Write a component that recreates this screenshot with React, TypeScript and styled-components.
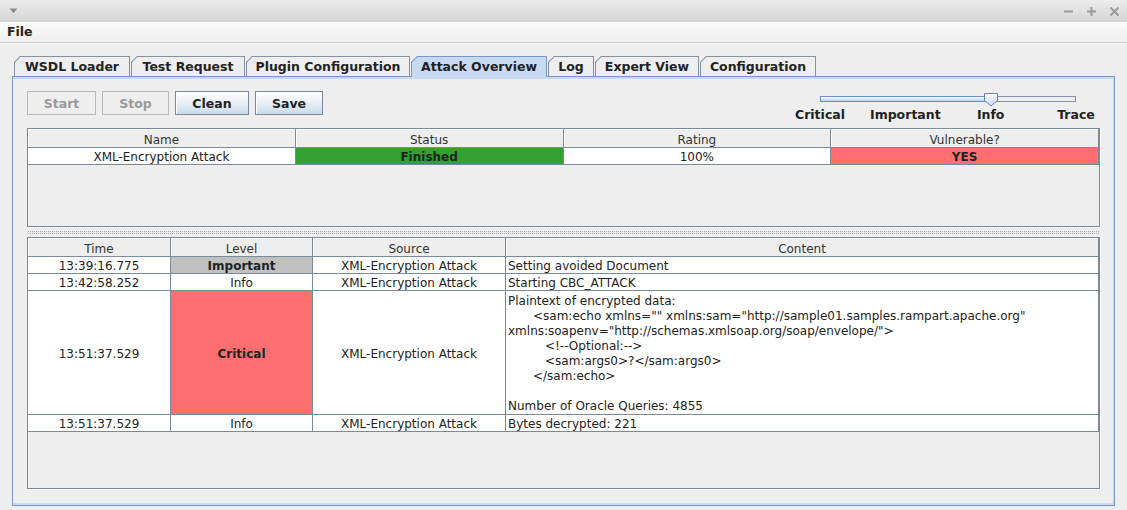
import React from "react";
import styled, { createGlobalStyle } from "styled-components";

const GRID = "#7a8a99";

const Global = createGlobalStyle`
  html, body { margin: 0; padding: 0; background: #eeeeee; }
  body { font-family: "DejaVu Sans", "Noto Sans", sans-serif; color: #333; }
  * { box-sizing: border-box; }
`;

const Window = styled.div`
  width: 1127px;
  height: 510px;
  display: flex;
  flex-direction: column;
  background: #eeeeee;
  overflow: hidden;
`;

const TitleBar = styled.div`
  height: 22px;
  flex: none;
  display: flex;
  align-items: center;
  justify-content: space-between;
  padding: 0 8px 0 9px;
  background: linear-gradient(#ececec, #d5d5d5);
`;

const TitleButtons = styled.div`
  display: flex;
  gap: 14px;
  align-items: center;
`;

const MenuBar = styled.div`
  height: 21px;
  flex: none;
  display: flex;
  align-items: center;
  padding: 0 0 2px 7px;
  background: linear-gradient(#fbfbfb, #eeeeee);
  border-bottom: 1px solid #c9c9c9;
  box-shadow: 0 1px 0 #fafafa;
`;

const MenuItem = styled.span`
  font-size: 12.5px;
  font-weight: bold;
  color: #222;
`;

const Body = styled.div`
  flex: 1;
  display: flex;
  flex-direction: column;
  padding: 13px 12px 4px 12px;
  min-height: 0;
`;

const TabStrip = styled.div`
  display: flex;
  gap: 1px;
  padding-left: 2px;
  height: 20px;
  flex: none;
  position: relative;
  z-index: 1;
`;

const Tab = styled.div<{ $w: number; $active?: boolean }>`
  width: ${(p) => p.$w}px;
  height: ${(p) => (p.$active ? 21 : 20)}px;
  padding: 1px 1px 0 1px;
  background: ${(p) => (p.$active ? "#7b96c6" : "#8391a3")};
  clip-path: polygon(6px 0, 100% 0, 100% 100%, 0 100%, 0 6px);
`;

const TabFace = styled.div<{ $active?: boolean }>`
  height: 100%;
  display: flex;
  align-items: center;
  justify-content: center;
  padding-bottom: ${(p) => (p.$active ? 1 : 0)}px;
  background: ${(p) => (p.$active ? "#c8daf0" : "#eeeeee")};
  clip-path: polygon(5.4px 0, 100% 0, 100% 100%, 0 100%, 0 5.4px);
  font-size: 12.5px;
  font-weight: bold;
  color: #222;
  white-space: nowrap;
`;

const Panel = styled.div`
  flex: 1;
  display: flex;
  flex-direction: column;
  border: 1px solid #7b96c6;
  box-shadow: inset 0 2px 0 #c8daf0, inset -1px 0 0 #c8daf0, inset 0 -2px 0 #c8daf0;
  padding: 14px 14px 16px 14px;
  min-height: 0;
`;

const Toolbar = styled.div`
  height: 37px;
  flex: none;
  display: flex;
  align-items: flex-start;
  gap: 6px;
`;

const Button = styled.button<{ $w: number; $disabled?: boolean }>`
  width: ${(p) => p.$w}px;
  height: 24px;
  padding: 0;
  font-family: "DejaVu Sans", sans-serif;
  font-size: 12.5px;
  font-weight: bold;
  color: ${(p) => (p.$disabled ? "#999999" : "#222222")};
  border: 1px solid ${(p) => (p.$disabled ? "#b8b8b8" : GRID)};
  background: ${(p) =>
    p.$disabled ? "#eeeeee" : "linear-gradient(#ffffff 0%, #eef3f9 35%, #dde7f2 70%, #c9d9ec 100%)"};
  box-shadow: ${(p) => (p.$disabled ? "none" : "inset 1px 1px 0 #ffffff")};
`;

const SliderBox = styled.div`
  margin-left: auto;
  margin-right: 24px;
  width: 256px;
  padding-top: 5px;
  display: flex;
  flex-direction: column;
`;

const TrackWrap = styled.div`
  position: relative;
  height: 6px;
  display: flex;
`;

const TrackFill = styled.div`
  width: 171px;
  height: 6px;
  border: 1px solid #6b8bc4;
  border-right: none;
  background: linear-gradient(#ffffff, #b8cfe5);
`;

const TrackRest = styled.div`
  flex: 1;
  height: 6px;
  border: 1px solid #8894a3;
  border-left: none;
  background: #eeeeee;
`;

const Thumb = styled.svg`
  position: absolute;
  left: 163px;
  top: -4px;
`;

const LabelRow = styled.div`
  display: flex;
  justify-content: space-between;
  margin-top: 5px;
`;

const TickLabel = styled.span`
  width: 0;
  display: flex;
  justify-content: center;
  white-space: nowrap;
  font-size: 12.5px;
  font-weight: bold;
  color: #222;
  line-height: 15px;
`;

const Scroll = styled.div<{ $h?: number }>`
  ${(p) => (p.$h ? `height: ${p.$h}px; flex: none;` : "flex: 1;")}
  border: 1px solid ${GRID};
  box-shadow: 1px 1px 0 #ffffff;
  background: #eeeeee;
  overflow: hidden;
`;

const Splitter = styled.div`
  height: 10px;
  flex: none;
  display: flex;
  align-items: center;
  padding: 0 1px;
`;

const Dots = styled.div`
  flex: 1;
  height: 3px;
  background-image: radial-gradient(circle at 0.5px 0.5px, #a8a8a8 0.7px, transparent 0.8px);
  background-size: 2px 2px;
`;

const Table = styled.table`
  width: 100%;
  table-layout: fixed;
  border-collapse: separate;
  border-spacing: 0;
  font-size: 12px;
`;

const Th = styled.th`
  height: 19px;
  padding: 4px 0 0 0;
  font-weight: normal;
  color: #333;
  background: #eeeeee;
  border-right: 1px solid ${GRID};
  border-bottom: 1px solid ${GRID};
  box-shadow: inset 1px 1px 0 #ffffff;
  line-height: 14px;
`;

const Td = styled.td<{ $bg?: string; $bold?: boolean; $left?: boolean; $h?: number; $top?: boolean }>`
  height: ${(p) => p.$h ?? 17}px;
  padding: ${(p) => (p.$top ? "0 2px" : "3px 2px 0 2px")};
  background: ${(p) => p.$bg ?? "#ffffff"};
  border-right: 1px solid ${GRID};
  border-bottom: 1px solid ${GRID};
  text-align: ${(p) => (p.$left ? "left" : "center")};
  vertical-align: ${(p) => (p.$top ? "top" : "middle")};
  font-weight: ${(p) => (p.$bold ? "bold" : "normal")};
  color: #222;
  line-height: 13px;
  white-space: nowrap;
  overflow: hidden;
`;

const Lines = styled.div`
  padding-top: 3px;
  line-height: 15px;
`;

const Line = styled.div<{ $indent: number }>`
  padding-left: ${(p) => p.$indent}px;
  min-height: 15px;
  white-space: pre;
`;

const tabs = [
  { label: "WSDL Loader", w: 116 },
  { label: "Test Request", w: 114 },
  { label: "Plugin Configuration", w: 164 },
  { label: "Attack Overview", w: 136, active: true },
  { label: "Log", w: 46 },
  { label: "Expert View", w: 104 },
  { label: "Configuration", w: 116 },
];

const contentLines: { t: string; i: number }[] = [
  { t: "Plaintext of encrypted data:", i: 0 },
  { t: '<sam:echo xmlns="" xmlns:sam="http://sample01.samples.rampart.apache.org"', i: 25 },
  { t: 'xmlns:soapenv="http://schemas.xmlsoap.org/soap/envelope/">', i: -2 },
  { t: "<!--Optional:-->", i: 37 },
  { t: "<sam:args0>?</sam:args0>", i: 37 },
  { t: "</sam:echo>", i: 25 },
  { t: "", i: 0 },
  { t: "Number of Oracle Queries: 4855", i: 0 },
];

export default function App() {
  return (
    <>
      <Global />
      <Window>
        <TitleBar>
          <svg width="9" height="6" viewBox="0 0 9 6">
            <path d="M0.5 0.5 L8.5 0.5 L4.5 5 Z" fill="#8a8a8a" />
          </svg>
          <TitleButtons>
            <svg width="9" height="9" viewBox="0 0 9 9">
              <path d="M0 4.5 H9" stroke="#9a9a9a" strokeWidth="2" />
            </svg>
            <svg width="9" height="9" viewBox="0 0 9 9">
              <path d="M0 4.5 H9 M4.5 0 V9" stroke="#9a9a9a" strokeWidth="2" />
            </svg>
            <svg width="9" height="9" viewBox="0 0 9 9">
              <path d="M0.5 0.5 L8.5 8.5 M8.5 0.5 L0.5 8.5" stroke="#9a9a9a" strokeWidth="2" />
            </svg>
          </TitleButtons>
        </TitleBar>
        <MenuBar>
          <MenuItem>File</MenuItem>
        </MenuBar>
        <Body>
          <TabStrip>
            {tabs.map((t) => (
              <Tab key={t.label} $w={t.w} $active={t.active}>
                <TabFace $active={t.active}>{t.label}</TabFace>
              </Tab>
            ))}
          </TabStrip>
          <Panel>
            <Toolbar>
              <Button $w={69} $disabled>Start</Button>
              <Button $w={67} $disabled>Stop</Button>
              <Button $w={74}>Clean</Button>
              <Button $w={68}>Save</Button>
              <SliderBox>
                <TrackWrap>
                  <TrackFill />
                  <TrackRest />
                  <Thumb width="16" height="15" viewBox="0 0 16 15">
                    <defs>
                      <linearGradient id="tg" x1="0" y1="0" x2="0" y2="1">
                        <stop offset="0" stopColor="#ffffff" />
                        <stop offset="1" stopColor="#c4d7ee" />
                      </linearGradient>
                    </defs>
                    <path d="M1.5 1.5 H14.5 V8.5 L8 14 L1.5 8.5 Z" fill="url(#tg)" stroke="#6382bf" strokeWidth="1" />
                  </Thumb>
                </TrackWrap>
                <LabelRow>
                  <TickLabel>Critical</TickLabel>
                  <TickLabel>Important</TickLabel>
                  <TickLabel>Info</TickLabel>
                  <TickLabel>Trace</TickLabel>
                </LabelRow>
              </SliderBox>
            </Toolbar>

            <Scroll $h={99}>
              <Table>
                <colgroup>
                  <col style={{ width: "25%" }} />
                  <col style={{ width: "25%" }} />
                  <col style={{ width: "25%" }} />
                  <col style={{ width: "25%" }} />
                </colgroup>
                <thead>
                  <tr>
                    <Th>Name</Th>
                    <Th>Status</Th>
                    <Th>Rating</Th>
                    <Th>Vulnerable?</Th>
                  </tr>
                </thead>
                <tbody>
                  <tr>
                    <Td $h={16}>XML-Encryption Attack</Td>
                    <Td $h={16} $bg="#33a033" $bold>Finished</Td>
                    <Td $h={16}>100%</Td>
                    <Td $h={16} $bg="#ff6f6f" $bold>YES</Td>
                  </tr>
                </tbody>
              </Table>
            </Scroll>

            <Splitter>
              <Dots />
            </Splitter>

            <Scroll>
              <Table>
                <colgroup>
                  <col style={{ width: "143px" }} />
                  <col style={{ width: "142px" }} />
                  <col style={{ width: "193px" }} />
                  <col />
                </colgroup>
                <thead>
                  <tr>
                    <Th>Time</Th>
                    <Th>Level</Th>
                    <Th>Source</Th>
                    <Th>Content</Th>
                  </tr>
                </thead>
                <tbody>
                  <tr>
                    <Td>13:39:16.775</Td>
                    <Td $bg="#c0c0c0" $bold>Important</Td>
                    <Td>XML-Encryption Attack</Td>
                    <Td $left>Setting avoided Document</Td>
                  </tr>
                  <tr>
                    <Td>13:42:58.252</Td>
                    <Td>Info</Td>
                    <Td>XML-Encryption Attack</Td>
                    <Td $left>Starting CBC_ATTACK</Td>
                  </tr>
                  <tr>
                    <Td $h={122}>13:51:37.529</Td>
                    <Td $h={122} $bg="#ff6f6f" $bold>Critical</Td>
                    <Td $h={122}>XML-Encryption Attack</Td>
                    <Td $h={122} $left $top>
                      <Lines>
                        {contentLines.map((l, idx) => (
                          <Line key={idx} $indent={l.i}>{l.t}</Line>
                        ))}
                      </Lines>
                    </Td>
                  </tr>
                  <tr>
                    <Td>13:51:37.529</Td>
                    <Td>Info</Td>
                    <Td>XML-Encryption Attack</Td>
                    <Td $left>Bytes decrypted: 221</Td>
                  </tr>
                </tbody>
              </Table>
            </Scroll>
          </Panel>
        </Body>
      </Window>
    </>
  );
}
